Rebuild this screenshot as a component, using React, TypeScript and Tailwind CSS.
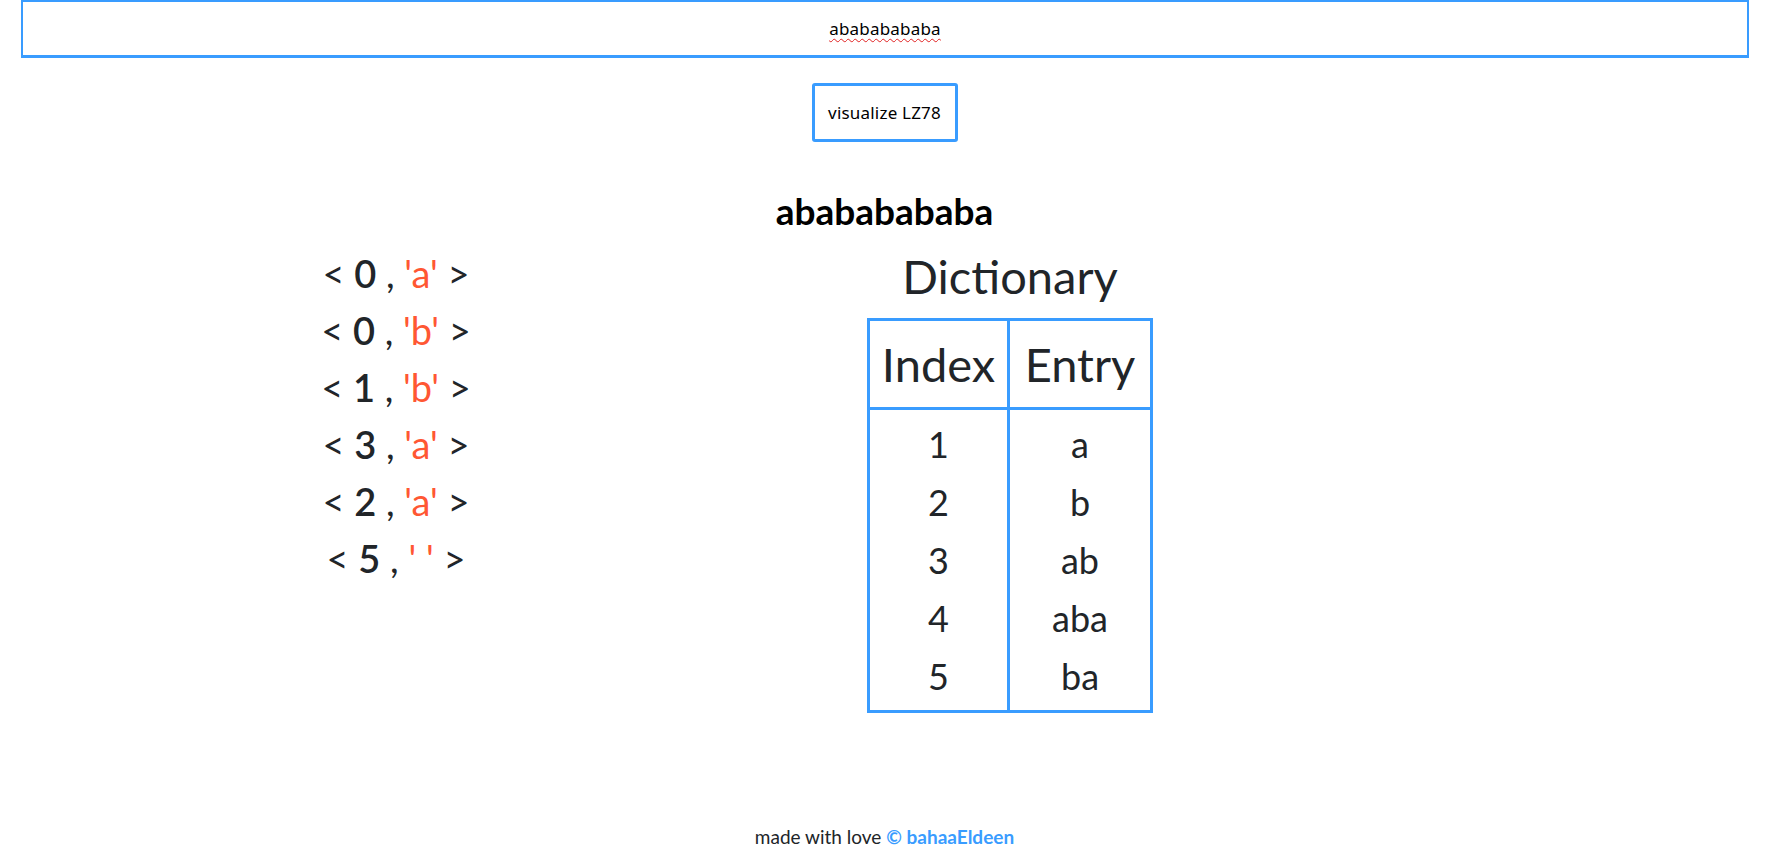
import React from "react";

const tuples: [string, string][] = [
  ["0", "'a'"],
  ["0", "'b'"],
  ["1", "'b'"],
  ["3", "'a'"],
  ["2", "'a'"],
  ["5", "' '"],
];

const dict: [string, string][] = [
  ["1", "a"],
  ["2", "b"],
  ["3", "ab"],
  ["4", "aba"],
  ["5", "ba"],
];

export default function App() {
  return (
    <div className="w-[1769px] h-[859px] flex flex-col bg-white text-[#212529] font-['Lato',sans-serif]">
      <div className="pl-[21px]">
        <div className="w-[1728px] h-[58px] border-2 border-b-[3px] border-[#399cff] bg-white flex items-center justify-center text-[17px] text-black font-['Noto_Sans',sans-serif] tracking-[0.2px]">
          <span className="underline decoration-wavy decoration-[#e02020] decoration-1 underline-offset-[3px]">abababababa</span>
        </div>
      </div>

      <div className="mt-[25px] flex justify-center">
        <button className="w-[146px] h-[59px] border-[3px] border-[#399cff] rounded-[3px] bg-white text-[17px] text-black font-['Noto_Sans',sans-serif] tracking-[0.2px]">
          visualize LZ78
        </button>
      </div>

      <h2 className="mt-[47px] text-center text-[37px] leading-[43px] font-bold text-black">abababababa</h2>

      <div className="mt-[13px] flex">
        <div className="w-[792px] flex flex-col items-center">
          {tuples.map(([n, c], i) => (
            <div key={i} className="h-[57px] leading-[57px] text-[38px] whitespace-pre">
              {"< "}
              <span className="font-semibold">{n}</span>
              {" , "}
              <span className="text-[#ff5733]">{c}</span>
              {" >"}
            </div>
          ))}
        </div>

        <div className="ml-[75px] w-[286px] pt-[3px] flex flex-col">
          <div className="text-center text-[47px] leading-[56px] mb-[14px]">Dictionary</div>
          <div className="flex border-[3px] border-[#399cff]">
            <div className="w-[140px] border-r-[3px] border-[#399cff] flex flex-col">
              <div className="h-[89px] border-b-[3px] border-[#399cff] flex items-center justify-center text-[47px]">Index</div>
              <div className="pt-[5px] pb-[5px] flex flex-col">
                {dict.map(([k]) => (
                  <div key={k} className="h-[58px] flex items-center justify-center text-[36px]">{k}</div>
                ))}
              </div>
            </div>
            <div className="flex-1 flex flex-col">
              <div className="h-[89px] border-b-[3px] border-[#399cff] flex items-center justify-center text-[47px]">Entry</div>
              <div className="pt-[5px] pb-[5px] flex flex-col">
                {dict.map(([k, v]) => (
                  <div key={k} className="h-[58px] flex items-center justify-center text-[36px]">{v}</div>
                ))}
              </div>
            </div>
          </div>
        </div>
      </div>

      <div className="mt-auto mb-[10px] text-center text-[19px] leading-[24px]">
        made with love <span className="font-bold text-[#399cff]">© bahaaEldeen</span>
      </div>
    </div>
  );
}
